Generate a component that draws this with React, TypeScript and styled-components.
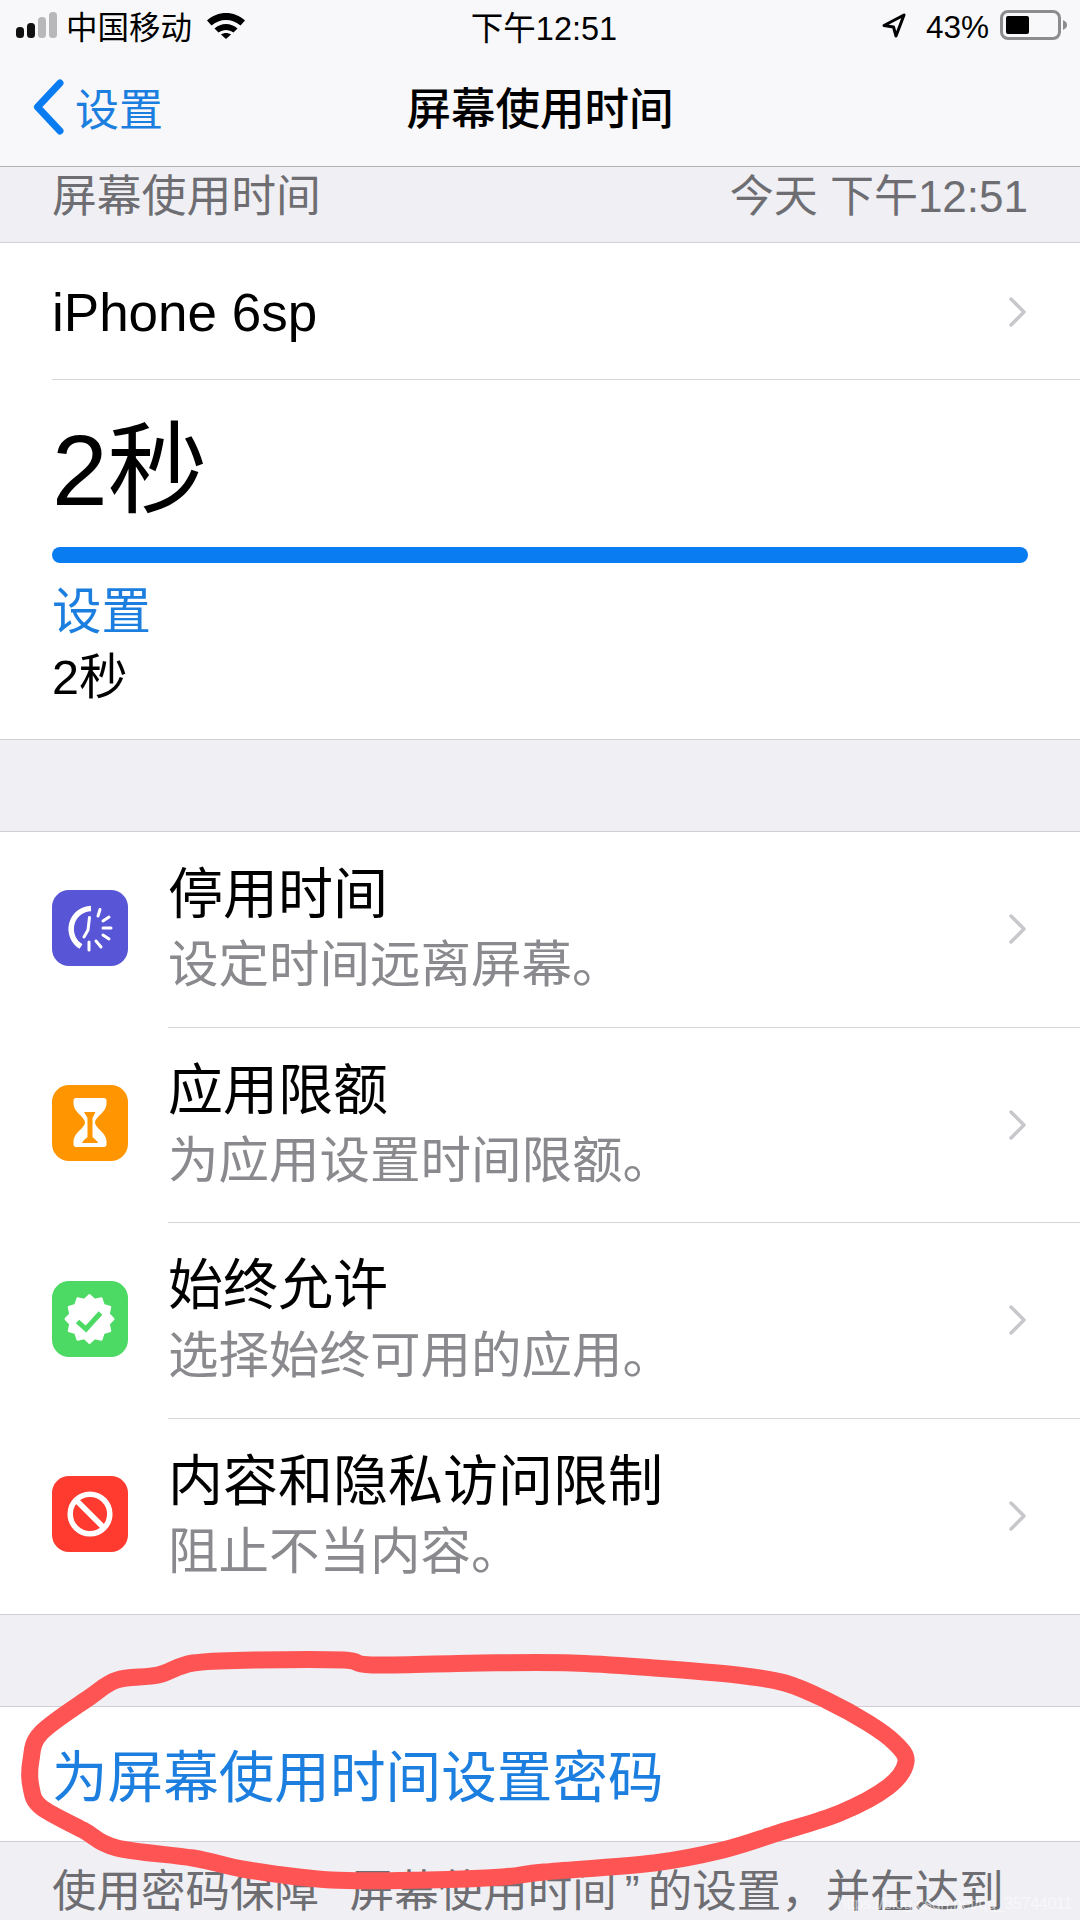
import styled, { createGlobalStyle } from "styled-components";
import React from "react";

const GlobalStyle = createGlobalStyle`
  html, body {
    margin: 0;
    padding: 0;
    background: #efeff4;
  }
  * {
    box-sizing: border-box;
  }
`;

const FONT = `"Liberation Sans", "Noto Sans CJK SC", sans-serif`;

const Page = styled.div`
  position: relative;
  width: 1080px;
  height: 1920px;
  overflow: hidden;
  background: #efeff4;
  font-family: ${FONT};
  color: #000;
`;

const StatusBar = styled.div`
  height: 54px;
  display: grid;
  grid-template-columns: 1fr auto 1fr;
  align-items: center;
  padding: 0 12px 4px 16px;
  background: #f8f8fa;
  font-size: 31.5px;
`;

const StatusLeft = styled.div`
  display: flex;
  align-items: center;
  gap: 8px;
`;

const StatusRight = styled.div`
  display: flex;
  align-items: center;
  justify-content: flex-end;
  gap: 11px;
`;

const StatusTime = styled.span`
  margin-left: 4px;
  font-size: 32.5px;
`;

const Percent = styled.span`
  margin-top: 4px;
  margin-left: 8px;
`;

const NavBar = styled.div`
  height: 113px;
  display: grid;
  grid-template-columns: 1fr auto 1fr;
  align-items: center;
  padding: 0 33px 9px;
  background: #f8f8fa;
  border-bottom: 1px solid #b2b2b4;
`;

const BackLink = styled.div`
  display: flex;
  align-items: center;
  gap: 11px;
  margin-left: -1px;
  padding-top: 3px;
  color: #1c7fe0;
  font-size: 44px;
`;

const NavTitle = styled.div`
  font-size: 44.5px;
  font-weight: 500;
`;

const SectionHead = styled.div`
  height: 76px;
  display: flex;
  justify-content: space-between;
  align-items: center;
  padding: 0 52px 24px;
  font-size: 44px;
  color: #6d6d72;
  border-bottom: 1px solid #d2d2d6;
`;

const SectionTitle = styled.span`
  font-size: 44.8px;
`;

const Card = styled.div`
  background: #fff;
  border-bottom: 1px solid #cfcfd3;
`;

const DeviceRow = styled.div`
  height: 137px;
  display: flex;
  align-items: center;
  justify-content: space-between;
  margin-left: 52px;
  padding: 2px 52px 0 0;
  border-bottom: 1px solid #d6d6da;
  font-size: 53px;
`;

const Usage = styled.div`
  padding: 0 52px;
  height: 359px;
`;

const BigTime = styled.div`
  font-size: 100px;
  line-height: 120px;
  padding-top: 30px;
`;

const Bar = styled.div`
  height: 16px;
  margin-top: 17px;
  border-radius: 8px;
  background: #0a7cf2;
`;

const BarLabel = styled.div`
  font-size: 49.5px;
  line-height: 60px;
  margin-top: 19px;
  color: #1c7fe0;
`;

const BarValue = styled.div`
  font-size: 48.5px;
  line-height: 60px;
  margin-top: 5px;
`;

const Spacer = styled.div<{ $h: number }>`
  height: ${(p) => p.$h}px;
`;

const ListCard = styled.div`
  background: #fff;
  border-top: 1px solid #cfcfd3;
  border-bottom: 1px solid #cfcfd3;
`;

const Row = styled.div`
  display: flex;
  align-items: center;
  height: 195.5px;
  padding-left: 52px;
`;

const IconBox = styled.div<{ $bg: string }>`
  flex: none;
  width: 76px;
  height: 76px;
  margin-bottom: 4px;
  border-radius: 17px;
  background: ${(p) => p.$bg};
  display: flex;
  align-items: center;
  justify-content: center;
`;

const RowBody = styled.div<{ $last?: boolean }>`
  flex: 1;
  align-self: stretch;
  margin-left: 40px;
  padding-right: 52px;
  display: flex;
  align-items: center;
  justify-content: space-between;
  border-bottom: ${(p) => (p.$last ? "none" : "1px solid #d6d6da")};
`;

const RowText = styled.div`
  padding-bottom: 2px;
`;

const RowTitle = styled.div`
  font-size: 55px;
  line-height: 66px;
`;

const RowSub = styled.div`
  font-size: 50.5px;
  line-height: 60px;
  margin-top: 8px;
  color: #8a8a8e;
`;

const ActionRow = styled.div`
  height: 136px;
  display: flex;
  align-items: center;
  padding: 0 0 3px 52px;
  background: #fff;
  border-top: 1px solid #cfcfd3;
  border-bottom: 1px solid #cfcfd3;
  font-size: 55.6px;
  color: #1c7fe0;
`;

const FooterText = styled.div`
  padding: 20px 52px 0;
  font-size: 44.5px;
  line-height: 60px;
  color: #6d6d72;
  white-space: nowrap;
`;

const Quote = styled.span`
  padding: 0 8px;
`;

const Scribble = styled.svg`
  position: absolute;
  left: 0;
  top: 0;
  pointer-events: none;
`;

const Watermark = styled.div`
  position: absolute;
  right: 8px;
  bottom: 7px;
  font-size: 16px;
  letter-spacing: -0.3px;
  color: rgba(255, 255, 255, 0.55);
  white-space: nowrap;
`;

const WifiSvg = styled.svg`
  margin-left: 7px;
`;

const Chevron = () => (
  <svg width="20" height="32" viewBox="0 0 20 32" fill="none">
    <path d="M3 3l13 13L3 29" stroke="#c7c7cc" strokeWidth="3.5" strokeLinecap="round" strokeLinejoin="round" />
  </svg>
);

const BackChevron = () => (
  <svg width="32" height="56" viewBox="0 0 32 56" fill="none">
    <path d="M28 4L5.500 28L28 52" stroke="#0a7cf2" strokeWidth="7" strokeLinecap="round" strokeLinejoin="round" />
  </svg>
);

const Signal = () => (
  <svg width="42" height="27" viewBox="0 0 42 27">
    <rect x="0" y="15" width="8" height="11" rx="3.5" fill="#111" />
    <rect x="11" y="11" width="8" height="15" rx="3.5" fill="#111" />
    <rect x="22" y="5" width="8" height="21" rx="3.5" fill="#b8b8ba" />
    <rect x="33" y="0" width="8" height="26" rx="3.5" fill="#b8b8ba" />
  </svg>
);

const Wifi = () => (
  <WifiSvg width="38" height="27" viewBox="0 0 38 27" fill="none">
    <path d="M0 8.5C10.500 -1.500 27.500 -1.500 38 8.500L33.500 13.500C25.500 6 12.500 6 4.500 13.500Z" fill="#000" />
    <path d="M7.500 16.500C14 10.500 24 10.500 30.500 16.500L26.500 20.500C22 17 16 17 11.500 20.500Z" fill="#000" />
    <path d="M14 22.500C17 20.500 21 20.500 24 22.500L19 27Z" fill="#000" />
  </WifiSvg>
);

const Location = () => (
  <svg width="26" height="26" viewBox="0 0 26 26" fill="none">
    <path d="M23 3L3 13.500l9.500 1.500 2.500 9z" stroke="#000" strokeWidth="3" strokeLinejoin="round" />
  </svg>
);

const Battery = () => (
  <svg width="68" height="30" viewBox="0 0 68 30" fill="none">
    <rect x="1.500" y="1.500" width="58" height="27" rx="6.500" stroke="#8c8c8e" strokeWidth="3" />
    <rect x="6" y="6" width="23" height="18" rx="2" fill="#000" />
    <path d="M63 10c3 1.500 4 3 4 5s-1 3.500-4 5z" fill="#8c8c8e" />
  </svg>
);

const DowntimeIcon = () => (
  <svg width="76" height="76" viewBox="0 0 76 76" fill="none" stroke="#fff" strokeLinecap="round">
    <path d="M39 18.500A20.500 20.500 0 0 0 29 56.500" strokeWidth="5.500" strokeLinecap="butt" />
    <path d="M37.500 27.500L36 40l-4 7" strokeWidth="3" />
    <path d="M48 19.500l-2 6.500M57 27l-6 4M59 38h-8M57 49l-6-4M49 57l-5-6M37 60v-8" strokeWidth="3" />
  </svg>
);

const HourglassIcon = () => (
  <svg width="76" height="76" viewBox="0 0 76 76">
    <path
      d="M24 13h28c1.500 0 2.500 1 2.500 2.500v3.500c0 8-11.500 13-11.500 18.500s11.500 10.500 11.500 18.500v3.500c0 1.500-1 2.500-2.500 2.500h-28c-1.500 0-2.500-1-2.500-2.500v-3.500c0-8 11.500-13 11.500-18.500s-11.500-10.500-11.500-18.500v-3.500c0-1.500 1-2.500 2.500-2.500z"
      fill="#fff"
    />
    <path d="M32 27h11.500l-3 6v19c2 2 4.500 3.500 5.500 6H30c1-2.500 3.500-4 5.500-6V33z" fill="#ff9500" />
  </svg>
);

const badgePoints = Array.from({ length: 24 }, (_, i) => {
  const r = i % 2 === 0 ? 24 : 20;
  const a = (i * Math.PI) / 12;
  return `${37.5 + r * Math.sin(a)},${38 - r * Math.cos(a)}`;
}).join(" ");

const BadgeIcon = () => (
  <svg width="76" height="76" viewBox="0 0 76 76" fill="none">
    <polygon points={badgePoints} fill="#fff" stroke="#fff" strokeWidth="2" strokeLinejoin="round" />
    <path d="M25.500 40.500l8.500 7.500 14.500-16" stroke="#4cd964" strokeWidth="5" />
  </svg>
);

const BlockIcon = () => (
  <svg width="76" height="76" viewBox="0 0 76 76" fill="none" stroke="#fff" strokeWidth="5.500">
    <circle cx="38" cy="38" r="19.800" />
    <path d="M24.500 24.500l27 27" />
  </svg>
);

// hand-drawn ring round the passcode row, traced from the screenshot
const ringPoints: [number, number][] = [
  [31, 1760], [41, 1733], [90, 1697], [117, 1680], [158, 1675], [193, 1663], [255, 1660], [344, 1660],
  [372, 1665], [482, 1663], [572, 1663], [654, 1668], [737, 1675], [785, 1683], [826, 1700], [868, 1723],
  [895, 1743], [906, 1762], [888, 1787], [840, 1813], [778, 1833], [723, 1850], [654, 1863], [544, 1872],
  [503, 1877], [427, 1880], [331, 1880], [248, 1870], [193, 1858], [117, 1848], [83, 1830], [41, 1807], [31, 1787],
];

const ringPath = ringPoints.reduce((d, p, i, pts) => {
  const n = pts.length;
  const p0 = pts[(i - 1 + n) % n];
  const p2 = pts[(i + 1) % n];
  const p3 = pts[(i + 2) % n];
  const c1x = p[0] + (p2[0] - p0[0]) / 6;
  const c1y = p[1] + (p2[1] - p0[1]) / 6;
  const c2x = p2[0] - (p3[0] - p[0]) / 6;
  const c2y = p2[1] - (p3[1] - p[1]) / 6;
  return `${d}C${c1x} ${c1y} ${c2x} ${c2y} ${p2[0]} ${p2[1]}`;
}, `M${ringPoints[0][0]} ${ringPoints[0][1]}`);

const rows = [
  { title: "停用时间", sub: "设定时间远离屏幕。", bg: "#5856d6", icon: <DowntimeIcon /> },
  { title: "应用限额", sub: "为应用设置时间限额。", bg: "#ff9500", icon: <HourglassIcon /> },
  { title: "始终允许", sub: "选择始终可用的应用。", bg: "#4cd964", icon: <BadgeIcon /> },
  { title: "内容和隐私访问限制", sub: "阻止不当内容。", bg: "#ff3b30", icon: <BlockIcon /> },
];

const App: React.FC = () => {
  return (
    <Page>
      <GlobalStyle />
      <StatusBar>
        <StatusLeft>
          <Signal />
          <span>中国移动</span>
          <Wifi />
        </StatusLeft>
        <StatusTime>下午12:51</StatusTime>
        <StatusRight>
          <Location />
          <Percent>43%</Percent>
          <Battery />
        </StatusRight>
      </StatusBar>
      <NavBar>
        <BackLink>
          <BackChevron />
          <span>设置</span>
        </BackLink>
        <NavTitle>屏幕使用时间</NavTitle>
      </NavBar>
      <SectionHead>
        <SectionTitle>屏幕使用时间</SectionTitle>
        <span>今天 下午12:51</span>
      </SectionHead>
      <Card>
        <DeviceRow>
          <span>iPhone 6sp</span>
          <Chevron />
        </DeviceRow>
        <Usage>
          <BigTime>2秒</BigTime>
          <Bar />
          <BarLabel>设置</BarLabel>
          <BarValue>2秒</BarValue>
        </Usage>
      </Card>
      <Spacer $h={91} />
      <ListCard>
        {rows.map((row, i) => (
          <Row key={row.title}>
            <IconBox $bg={row.bg}>{row.icon}</IconBox>
            <RowBody $last={i === rows.length - 1}>
              <RowText>
                <RowTitle>{row.title}</RowTitle>
                <RowSub>{row.sub}</RowSub>
              </RowText>
              <Chevron />
            </RowBody>
          </Row>
        ))}
      </ListCard>
      <Spacer $h={91} />
      <ActionRow>为屏幕使用时间设置密码</ActionRow>
      <FooterText>
        使用密码保障<Quote>“</Quote>屏幕使用时间<Quote>”</Quote>的设置，并在达到
      </FooterText>
      <Scribble width="1080" height="1920" viewBox="0 0 1080 1920" fill="none">
        <path d={ringPath} stroke="#ff5454" strokeWidth="17" strokeLinejoin="round" />
      </Scribble>
      <Watermark>https://blog.csdn.net/qq_35744011</Watermark>
    </Page>
  );
};

export default App;
